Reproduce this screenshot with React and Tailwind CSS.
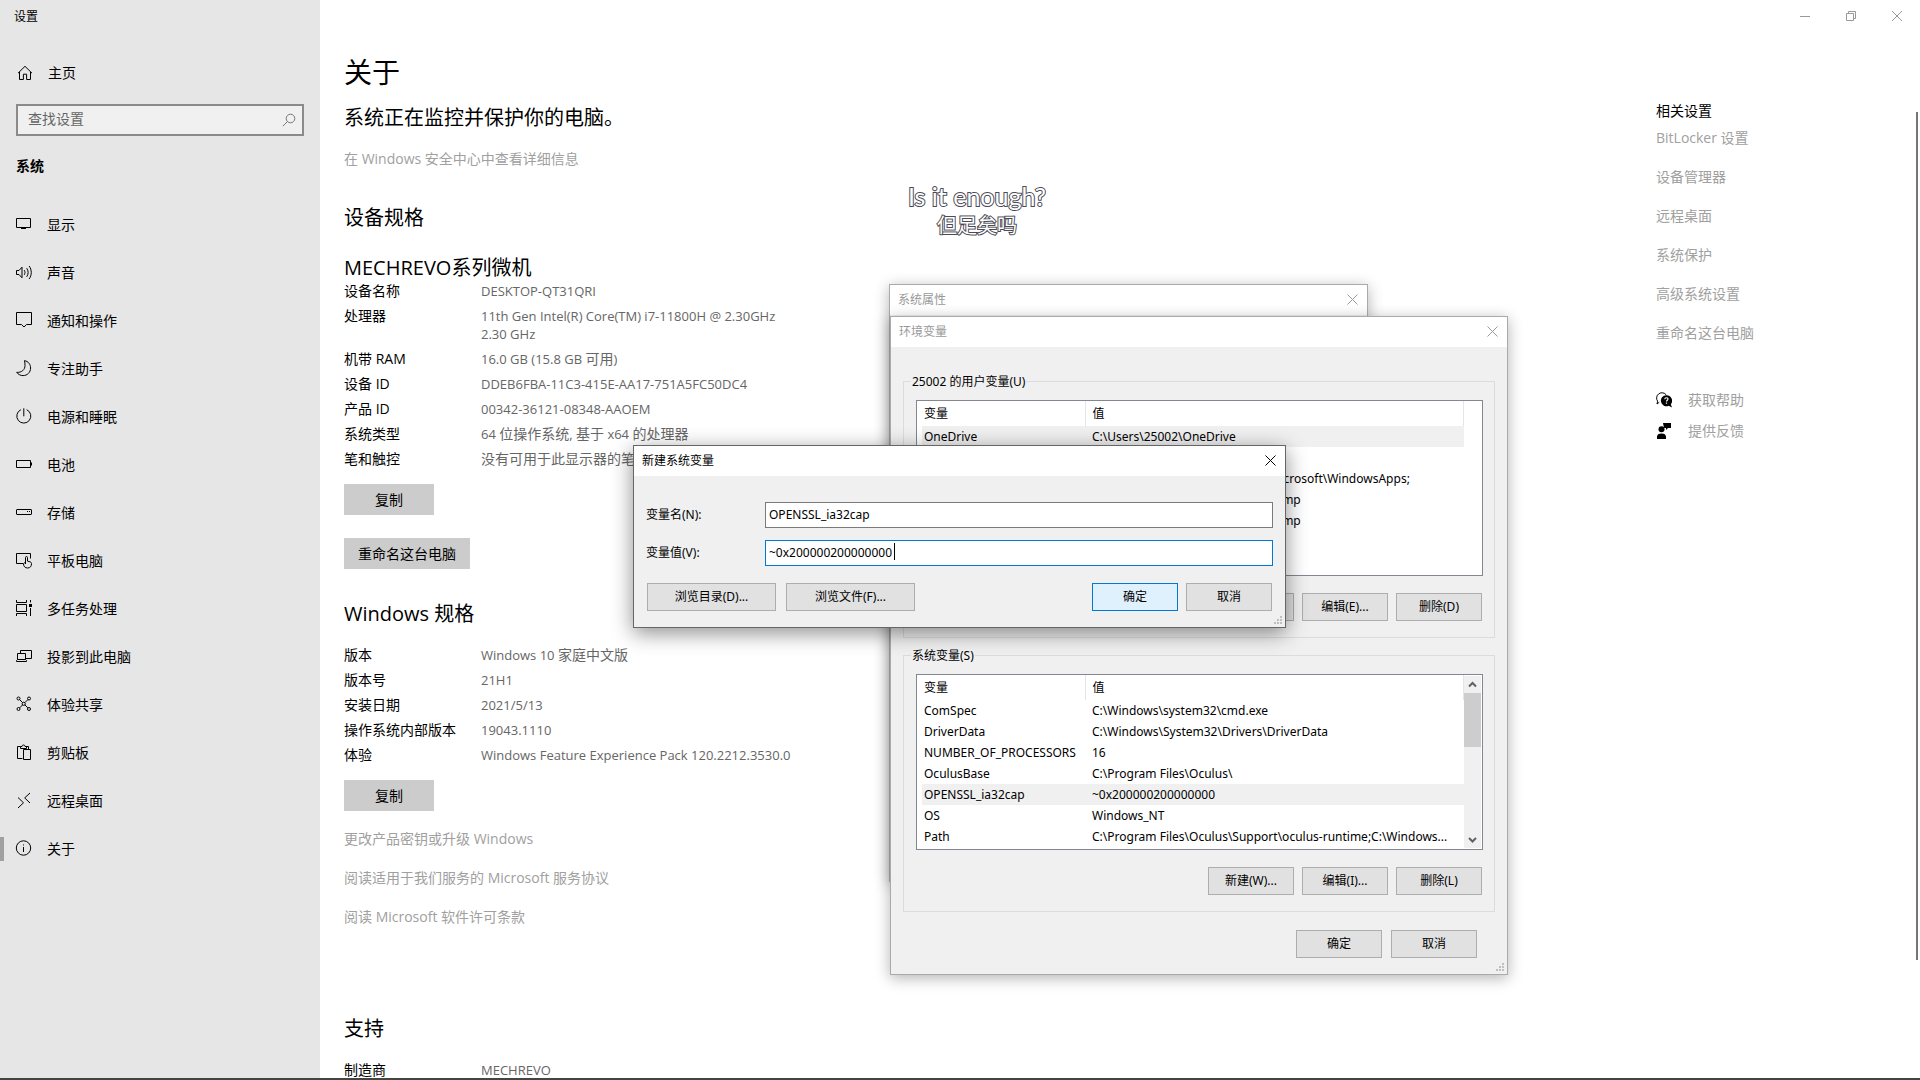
import React, { useState } from "react";

const navItems = [
  { name: "display", label: "显示" },
  { name: "sound", label: "声音" },
  { name: "notice", label: "通知和操作" },
  { name: "focus", label: "专注助手" },
  { name: "power", label: "电源和睡眠" },
  { name: "battery", label: "电池" },
  { name: "storage", label: "存储" },
  { name: "tablet", label: "平板电脑" },
  { name: "multitask", label: "多任务处理" },
  { name: "project", label: "投影到此电脑" },
  { name: "share", label: "体验共享" },
  { name: "clipboard", label: "剪贴板" },
  { name: "remote", label: "远程桌面" },
  { name: "about", label: "关于" },
];

const deviceSpecs = [
  ["设备名称", "DESKTOP-QT31QRI"],
  ["处理器", "11th Gen Intel(R) Core(TM) i7-11800H @ 2.30GHz\n2.30 GHz"],
  ["机带 RAM", "16.0 GB (15.8 GB 可用)"],
  ["设备 ID", "DDEB6FBA-11C3-415E-AA17-751A5FC50DC4"],
  ["产品 ID", "00342-36121-08348-AAOEM"],
  ["系统类型", "64 位操作系统, 基于 x64 的处理器"],
  ["笔和触控", "没有可用于此显示器的笔或触控输入"],
];

const windowsSpecs = [
  ["版本", "Windows 10 家庭中文版"],
  ["版本号", "21H1"],
  ["安装日期", "2021/5/13"],
  ["操作系统内部版本", "19043.1110"],
  ["体验", "Windows Feature Experience Pack 120.2212.3530.0"],
];

const licenseLinks = [
  "更改产品密钥或升级 Windows",
  "阅读适用于我们服务的 Microsoft 服务协议",
  "阅读 Microsoft 软件许可条款",
];

const relatedLinks = [
  "BitLocker 设置",
  "设备管理器",
  "远程桌面",
  "系统保护",
  "高级系统设置",
  "重命名这台电脑",
];

const userVars = [
  ["OneDrive", "C:\\Users\\25002\\OneDrive"],
  ["OneDriveConsumer", "C:\\Users\\25002\\OneDrive"],
  ["Path", "C:\\Users\\25002\\AppData\\Local\\Microsoft\\WindowsApps;"],
  ["TEMP", "C:\\Users\\25002\\AppData\\Local\\Temp"],
  ["TMP", "C:\\Users\\25002\\AppData\\Local\\Temp"],
];

const systemVars = [
  ["ComSpec", "C:\\Windows\\system32\\cmd.exe"],
  ["DriverData", "C:\\Windows\\System32\\Drivers\\DriverData"],
  ["NUMBER_OF_PROCESSORS", "16"],
  ["OculusBase", "C:\\Program Files\\Oculus\\"],
  ["OPENSSL_ia32cap", "~0x200000200000000"],
  ["OS", "Windows_NT"],
  ["Path", "C:\\Program Files\\Oculus\\Support\\oculus-runtime;C:\\Windows..."],
];

const icons = {
  home: <path d="M1 8.2 8 1.3l7 6.9M2.5 7v7.5h3.9V9.2h3.2v5.3h3.9V7" />,
  display: <path d="M.5 1.5h14v9H.5zM7.5 10.5v1M5 11.5h5" />,
  sound: (
    <path d="M.5 5.5v4H3l3 3.3V2.2L3 5.5zM8.3 5.2c.9 1.4.9 3.2 0 4.6M10.7 3.2c1.9 2.5 1.9 6.1 0 8.6M13.1 1c2.9 3.8 2.9 9.2 0 13" />
  ),
  notice: <path d="M.5-.5h15v12h-5L8 14l-2.500-2.500h-5z" />,
  focus: (
    <path d="M8.500-.4c3.700.7 6.100 3.700 6.100 7.400 0 4.300-3.300 7.600-7.500 7.600-2.600 0-4.900-1.200-6.400-3.200C6 11.600 9 8.600 9 4.500c0-1.700-.1-3.200-.5-4.900z" />
  ),
  power: <path d="M4.900.7a7 7 0 1 0 5.800 0M7.800-.7v8" />,
  battery: <path d="M.5 3.500h14v7h-14zM15.500 5.500v3" />,
  storage: <path d="M.5 5a.5.500 0 0 1 .5-.5h14a.5.500 0 0 1 .5.500v4a.5.500 0 0 1-.5.500H1a.5.500 0 0 1-.5-.5zM11 6.500h1M13 6.500h1" />,
  tablet: (
    <path d="M7 10.500H.5v-10h14v5M9.500 11V4.500a1 1 0 0 1 2 0v3.600l2.700.8c.8.200 1.300.8 1.300 1.600 0 2.600-1 4.500-4 4.500-2.300 0-4-1.700-4-4 0-1 .8-1.500 2-1" />
  ),
  multitask: (
    <>
      <path d="M.5-1v2.500h10V-1M.5 3.500h10v7H.5zM.5 15v-2.500h10V15M14.500-1v2.500M14.500 7v8" />
      <path d="M13 4.500h3" strokeWidth="3" />
    </>
  ),
  project: <path d="M4.500 4.500v-3h11v8h-6M1.500 4.500h8v6h-8zM.5 12.500v-1l1-1h8l1 1v1z" />,
  share: (
    <>
      <circle cx="2.500" cy="1.500" r="1.500" />
      <circle cx="13" cy="1.500" r="1.500" />
      <circle cx="2.500" cy="12" r="1.500" />
      <circle cx="13" cy="12" r="1.500" />
      <circle cx="7.700" cy="6.800" r="1.600" />
      <path d="m3.600 2.600 3 3M11.900 2.600l-3 3M3.600 10.900l3-3M11.900 10.900l-3-3" />
    </>
  ),
  clipboard: <path d="M6.500 13.500h-5v-12h3M9.500 1.500h3v3M4.500 3.500v-2h1.500a1.500 1.500 0 0 1 3 0h1.500v2zM7.500 4.500h7v10h-7z" />,
  remote: <path d="M2 4.500 7.500 9.800 2 15M14 0 8.700 4.900 14 10" />,
  about: (
    <>
      <circle cx="7.500" cy="7" r="7.200" />
      <path d="M7.500 6v5M7.500 3.500v1" />
    </>
  ),
};

const Icon = ({ name }) => (
  <svg
    className="size-4 shrink-0 overflow-visible"
    viewBox="0 0 16 16"
    fill="none"
    stroke="currentColor"
    strokeWidth="1"
    aria-hidden="true"
  >
    {icons[name]}
  </svg>
);

const CloseIcon = () => (
  <svg className="size-[11px]" viewBox="0 0 11 11" stroke="currentColor" strokeWidth="1" aria-hidden="true">
    <path d="m.5.5 10 10M10.500.5l-10 10" />
  </svg>
);

const Grip = () => (
  <svg className="absolute right-[3px] bottom-[3px] size-2" viewBox="0 0 8 8" fill="#bfbfbf" aria-hidden="true">
    <path d="M6 0h2v2H6zM3 3h2v2H3zM6 3h2v2H6zM0 6h2v2H0zM3 6h2v2H3zM6 6h2v2H6z" />
  </svg>
);

// Latin runs are set one pixel smaller than the Chinese ones
const MixedText = ({ text }) =>
  text.split(/([\u4e00-\u9fff]+)/).map((part, index) =>
    index % 2 ? (
      <span key={index} className="text-sm leading-[18px]">{part}</span>
    ) : (
      part
    )
  );

const SpecList = ({ rows }) => (
  <dl className="grid grid-cols-[137px_auto] gap-y-[7px] text-sm leading-[18px]">
    {rows.map(([term, value]) => (
      <React.Fragment key={term}>
        <dt>{term}</dt>
        <dd className="text-[13px] leading-[18px] whitespace-pre text-[#666]">
          <MixedText text={value} />
        </dd>
      </React.Fragment>
    ))}
  </dl>
);

const GrayButton = ({ wide, children }) => (
  <button
    type="button"
    className={`block h-[31px] bg-[#ccc] text-sm ${wide ? "w-[126px]" : "w-[90px]"}`}
  >
    {children}
  </button>
);

const DialogButton = ({ wide, primary, children }) => (
  <button
    type="button"
    className={`h-7 border text-xs ${wide ? "w-[129px]" : "w-[86px]"} ${
      primary ? "border-[#0078d7] bg-[#e0f1fe]" : "border-[#adadad] bg-[#e1e1e1]"
    }`}
  >
    {children}
  </button>
);

const DialogTitle = ({ title, active }) => (
  <div className={`flex h-[30px] items-center justify-between bg-white pr-[9px] pl-2 ${active ? "" : "text-[#999]"}`}>
    <span>{title}</span>
    <button type="button" aria-label="关闭" className="pb-0.5">
      <CloseIcon />
    </button>
  </div>
);

const VariableList = ({ rows, selected, scroll }) => (
  <div className="flex h-44 border border-[#828790] bg-white pl-[5px]">
    <div className="w-[542px] overflow-hidden">
      <table className="w-full table-fixed text-left">
        <thead>
          <tr className="h-[25px]">
            <th className="w-[163px] border-r border-[#e5e5e5] pl-0.5 font-normal">变量</th>
            <th className="border-r border-[#e5e5e5] pl-[7px] font-normal">值</th>
          </tr>
        </thead>
        <tbody>
          {rows.map(([key, value]) => (
            <tr key={key} className={`h-[21px] ${key === selected ? "bg-[#f0f0f0]" : ""}`}>
              <td className="pl-0.5 whitespace-nowrap">{key}</td>
              <td className="pl-[7px] whitespace-nowrap">{value}</td>
            </tr>
          ))}
        </tbody>
      </table>
    </div>
    {scroll && (
      <div className="my-px flex w-[17px] flex-col items-center justify-between bg-[#f0f0f0] text-[#606060]">
        <svg className="h-[17px] w-[9px]" viewBox="0 0 9 17" fill="none" stroke="currentColor" strokeWidth="2" aria-hidden="true">
          <path d="m1 10.500 3.500-3.500L8 10.500" />
        </svg>
        <div className="mb-auto h-[54px] w-full bg-[#cdcdcd]" />
        <svg className="h-[17px] w-[9px]" viewBox="0 0 9 17" fill="none" stroke="currentColor" strokeWidth="2" aria-hidden="true">
          <path d="m1 7 3.500 3.500L8 7" />
        </svg>
      </div>
    )}
  </div>
);

const VariableGroup = ({ legend, rows, selected, scroll, buttons }) => (
  <fieldset className="border border-[#dcdcdc] pt-2.5 pr-[11px] pb-4 pl-3">
    <legend className="-ml-[5px] px-px pt-0.5 leading-4">{legend}</legend>
    <VariableList rows={rows} selected={selected} scroll={scroll} />
    <div className="mt-[17px] flex justify-end gap-2 pr-px">
      {buttons.map((label) => (
        <DialogButton key={label}>{label}</DialogButton>
      ))}
    </div>
  </fieldset>
);

const Sidebar = () => (
  <aside className="w-80 shrink-0 bg-[#e6e6e6]">
    <div className="flex h-[34px] items-center pl-3.5 text-xs">设置</div>
    <a href="#home" className="mt-[15px] flex h-12 items-center gap-[15px] pl-[17px] text-sm">
      <Icon name="home" />
      主页
    </a>
    <label className="mx-4 mt-[7px] flex h-8 items-center border-2 border-[#8a8a8a] bg-[#f0f0f0] pr-1.5 pl-2.5">
      <input
        type="text"
        aria-label="查找设置"
        placeholder="查找设置"
        className="min-w-0 flex-1 bg-transparent pb-0.5 text-sm outline-none placeholder:text-[#666]"
      />
      <svg className="size-3.5" viewBox="0 0 14 14" fill="none" stroke="#777" strokeWidth="1" aria-hidden="true">
        <circle cx="8.500" cy="5.500" r="4.300" />
        <path d="M5.500 8.500.8 13.200" />
      </svg>
    </label>
    <h2 className="mt-5 pl-4 text-sm leading-5 font-bold">系统</h2>
    <nav className="mt-[25px]">
      {navItems.map((item) => (
        <a key={item.name} href={`#${item.name}`} className="flex h-12 items-center text-sm">
          <span className={`mr-3 h-6 w-1 ${item.name === "about" ? "bg-[#a0a0a0]" : ""}`} />
          <Icon name={item.name} />
          <span className="ml-[15px]">{item.label}</span>
        </a>
      ))}
    </nav>
  </aside>
);

const WindowControls = () => (
  <div className="flex h-8 items-center justify-end text-[#999]">
    <button type="button" aria-label="最小化" className="flex w-[46px] justify-center">
      <svg className="h-[11px] w-2.5" viewBox="0 0 10 11" stroke="currentColor" aria-hidden="true">
        <path d="M0 5.500h10" />
      </svg>
    </button>
    <button type="button" aria-label="还原" className="flex w-[46px] justify-center">
      <svg className="size-2.5" viewBox="0 0 10 10" fill="none" stroke="currentColor" aria-hidden="true">
        <path d="M.5 2.500h7v7h-7zM2.500 2.500v-2h7v7h-2" />
      </svg>
    </button>
    <button type="button" aria-label="关闭" className="flex w-[46px] justify-center">
      <svg className="size-2.5" viewBox="0 0 10 10" stroke="currentColor" aria-hidden="true">
        <path d="m0 0 10 10M10 0 0 10" />
      </svg>
    </button>
  </div>
);

const RelatedSettings = () => (
  <aside className="w-[260px] shrink-0 pt-[69px] text-sm leading-5 text-[#a0a0a0]">
    <h2 className="text-black">相关设置</h2>
    <ul className="mt-[7px] flex flex-col gap-[19px]">
      {relatedLinks.map((label) => (
        <li key={label}>
          <a href="#related">{label}</a>
        </li>
      ))}
    </ul>
    <div className="mt-[47px] flex flex-col gap-[11px]">
      <a href="#help" className="flex items-center gap-4">
        <svg className="size-4" viewBox="0 0 16 16" aria-hidden="true">
          <path d="M3.200 10.300 1 12l.6-2.800A5.200 5.200 0 1 1 10.300 3" fill="none" stroke="#000" />
          <path d="M10.300 3.200a5.500 5.500 0 1 0 2.400 10.500L16 15.500l-1.200-3.300a5.500 5.500 0 0 0-4.500-9z" fill="#000" />
          <path d="M8.800 7.300c0-2 3.200-2 3.200-.2 0 1.200-1.500 1.100-1.500 2.500M10.500 10.500v1.200" fill="none" stroke="#fff" strokeWidth="1.200" />
        </svg>
        获取帮助
      </a>
      <a href="#feedback" className="flex items-center gap-4">
        <svg className="size-4" viewBox="0 0 16 16" aria-hidden="true">
          <path d="M7 0h8v5h-3l-2 2V5H8zM1 16v-2.200C1 11.700 2.700 10.500 5.500 10.500s4.500 1.200 4.500 3.300V16z" />
          <circle cx="5.500" cy="6.300" r="3" />
        </svg>
        提供反馈
      </a>
    </div>
  </aside>
);

const SystemPropertiesDialog = () => (
  <section className="absolute top-[284px] left-[889px] h-[598px] w-[479px] border border-[#aaa] bg-[#f0f0f0] text-xs shadow-[0_3px_14px_rgba(0,0,0,0.3)]">
    <DialogTitle title="系统属性" />
  </section>
);

const EnvironmentDialog = () => (
  <section className="absolute top-[316px] left-[890px] w-[618px] border border-[#aaa] bg-[#f0f0f0] font-['Noto_Sans','Noto_Sans_CJK_SC',sans-serif] text-xs shadow-[0_3px_14px_rgba(0,0,0,0.3)]">
    <DialogTitle title="环境变量" />
    <div className="flex flex-col gap-2 px-3 pt-[25px]">
      <VariableGroup
        legend="25002 的用户变量(U)"
        rows={userVars}
        selected="OneDrive"
        buttons={["新建(N)...", "编辑(E)...", "删除(D)"]}
      />
      <VariableGroup
        legend="系统变量(S)"
        rows={systemVars}
        selected="OPENSSL_ia32cap"
        scroll
        buttons={["新建(W)...", "编辑(I)...", "删除(L)"]}
      />
    </div>
    <div className="flex justify-end gap-[9px] pt-[18px] pr-[30px] pb-4">
      <DialogButton>确定</DialogButton>
      <DialogButton>取消</DialogButton>
    </div>
    <Grip />
  </section>
);

const NewVariableDialog = () => {
  const [name, setName] = useState("OPENSSL_ia32cap");
  const [value, setValue] = useState("~0x200000200000000");

  return (
    <section className="absolute top-[445px] left-[633px] w-[653px] border border-[#666] bg-[#f0f0f0] font-['Noto_Sans','Noto_Sans_CJK_SC',sans-serif] text-xs shadow-[0_5px_20px_rgba(0,0,0,0.45)]">
      <DialogTitle title="新建系统变量" active />
      <form className="px-3 pt-[26px] pb-4">
        <div className="flex items-center">
          <label htmlFor="var-name" className="w-[119px]">变量名(N):</label>
          <input
            id="var-name"
            type="text"
            value={name}
            onChange={(e) => setName(e.target.value)}
            className="h-[26px] flex-1 border border-[#7a7a7a] bg-white px-[3px] pb-0.5 outline-none"
          />
        </div>
        <div className="relative mt-3 flex items-center">
          <label htmlFor="var-value" className="w-[119px]">变量值(V):</label>
          <input
            id="var-value"
            type="text"
            value={value}
            onChange={(e) => setValue(e.target.value)}
            className="h-[26px] flex-1 border border-[#0078d7] bg-white px-[3px] pb-0.5 outline-none"
          />
          <span className="absolute top-[3px] left-[248px] h-[17px] w-px bg-black" />
        </div>
        <div className="mt-[17px] flex gap-2.5 px-px">
          <DialogButton wide>浏览目录(D)...</DialogButton>
          <DialogButton wide>浏览文件(F)...</DialogButton>
          <div className="ml-auto flex gap-2">
            <DialogButton primary>确定</DialogButton>
            <DialogButton>取消</DialogButton>
          </div>
        </div>
      </form>
      <Grip />
    </section>
  );
};

// desktop lyrics floating above the windows
const Lyrics = () => (
  <div className="absolute top-[180px] left-[906px] w-[142px] text-center whitespace-nowrap text-white">
    <p className="font-['Lato','Noto_Sans_CJK_SC',sans-serif] text-[25px] leading-8 [paint-order:stroke_fill] [-webkit-text-stroke:2px_#4a4a55]">
      Is it enough?
    </p>
    <p className="text-xl leading-7 [paint-order:stroke_fill] [-webkit-text-stroke:2px_#4a4a55]">但足矣吗</p>
  </div>
);

const App = () => {
  return (
    <div className="relative flex h-screen flex-col overflow-hidden bg-white font-['Open_Sans','Noto_Sans_CJK_SC',sans-serif] text-black">
      <div className="flex min-h-0 flex-1">
        <Sidebar />
        <div className="flex min-w-0 flex-1 flex-col">
          <WindowControls />
          <div className="flex min-h-0 flex-1">
            <main className="min-w-0 flex-1 pt-5 pl-6">
              <h1 className="text-[28px] leading-10">关于</h1>
              <p className="mt-3 text-xl leading-7">系统正在监控并保护你的电脑。</p>
              <a href="#security" className="mt-[17px] block text-sm leading-5 text-[#a0a0a0]">
                在 Windows 安全中心中查看详细信息
              </a>

              <h2 className="mt-[35px] text-xl leading-7">设备规格</h2>
              <h3 className="mt-[22px] text-xl leading-7">MECHREVO系列微机</h3>
              <SpecList rows={deviceSpecs} />
              <div className="mt-4 flex flex-col gap-[23px]">
                <GrayButton>复制</GrayButton>
                <GrayButton wide>重命名这台电脑</GrayButton>
              </div>

              <h2 className="mt-[31px] mb-[18px] text-xl leading-7">Windows 规格</h2>
              <SpecList rows={windowsSpecs} />
              <div className="mt-4">
                <GrayButton>复制</GrayButton>
              </div>
              <ul className="mt-[18px] flex flex-col gap-[19px] text-sm leading-5 text-[#a0a0a0]">
                {licenseLinks.map((label) => (
                  <li key={label}>
                    <a href="#license">{label}</a>
                  </li>
                ))}
              </ul>

              <h2 className="mt-[88px] mb-[18px] text-xl leading-7">支持</h2>
              <SpecList rows={[["制造商", "MECHREVO"]]} />
            </main>
            <RelatedSettings />
            <div className="mt-20 mr-0.5 mb-[118px] w-0.5 bg-[#767676]" />
          </div>
        </div>
      </div>
      <div className="h-0.5 shrink-0 bg-[#444]" />

      <Lyrics />
      <SystemPropertiesDialog />
      <EnvironmentDialog />
      <NewVariableDialog />
    </div>
  );
};

export default App;
